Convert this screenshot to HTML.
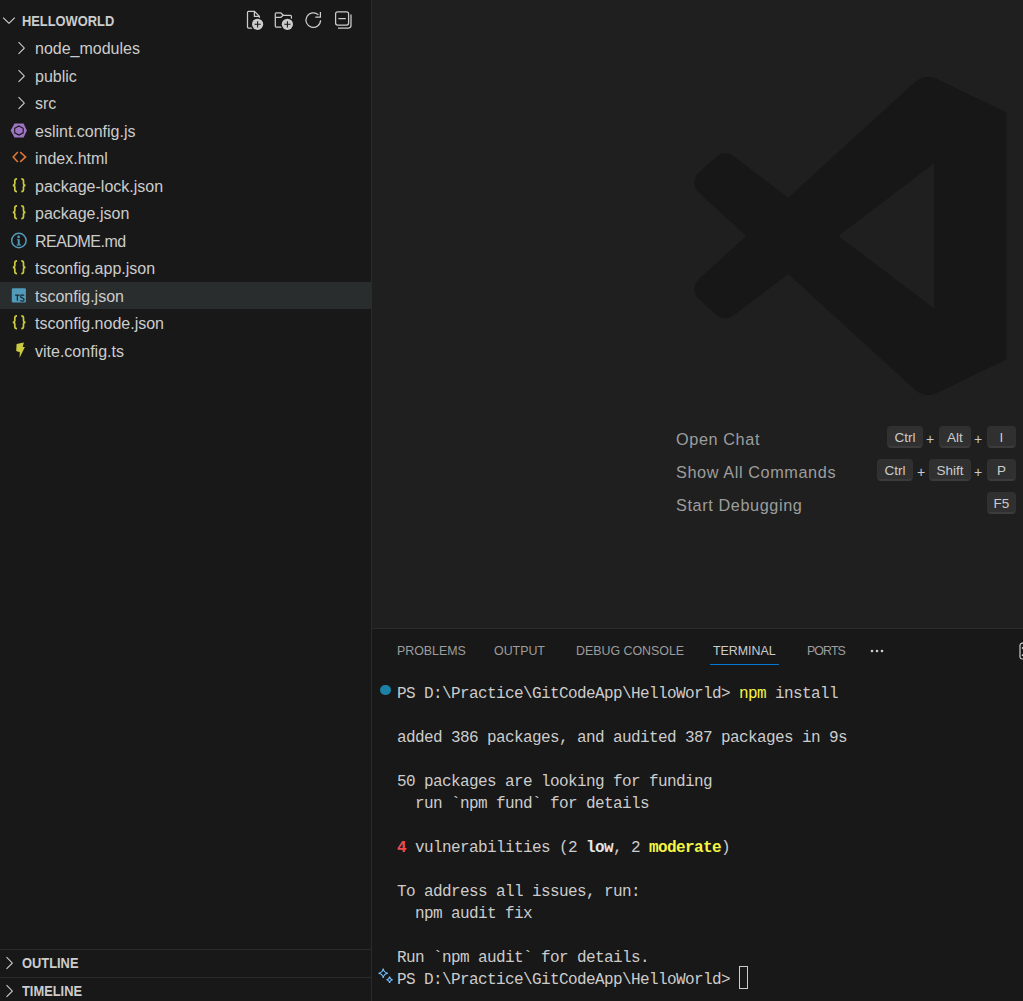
<!DOCTYPE html>
<html><head><meta charset="utf-8">
<style>
*{margin:0;padding:0;box-sizing:border-box}
html,body{width:1023px;height:1001px;overflow:hidden;background:#1f1f1f}
body{position:relative;font-family:"Liberation Sans",sans-serif;color:#cccccc}
.abs{position:absolute}
#sidebar{position:absolute;left:0;top:0;width:371px;height:1001px;background:#181818}
#sbborder{position:absolute;left:371px;top:0;width:1px;height:1001px;background:#2b2b2b}
#editor{position:absolute;left:372px;top:0;width:651px;height:628px;background:#1f1f1f;overflow:hidden}
#panel{position:absolute;left:372px;top:628px;width:651px;height:373px;background:#181818;border-top:1px solid #2b2b2b;overflow:hidden}
.row{position:absolute;left:0;width:371px;height:27.5px}
.row .lbl{position:absolute;left:35px;top:1px;line-height:27.5px;font-size:16px;white-space:pre;color:#cccccc}
.row.sel{background:#2a2d2e}
.row svg{position:absolute}
.hdr{position:absolute;font-weight:bold;font-size:14.3px;color:#cccccc;white-space:pre;transform-origin:0 0;transform:scaleX(0.9)}
.sech{position:absolute;left:0;width:371px;height:27.5px;border-top:1px solid #2b2b2b}
.term{position:absolute;left:25px;top:0;font-family:"Liberation Mono",monospace;font-size:16px;letter-spacing:-0.6px;line-height:22px;white-space:pre;color:#cccccc}
.tab{position:absolute;top:0;font-size:12.4px;line-height:20px;color:#9d9d9d;white-space:pre}
.wm{position:absolute;font-size:16.25px;letter-spacing:0.6px;color:#9d9d9d;white-space:pre}
.key{position:absolute;height:21.5px;background:#303030;border:1px solid rgba(51,51,51,0.6);border-bottom-color:rgba(68,68,68,0.6);border-radius:4px;box-shadow:inset 0 -1px 0 rgba(68,68,68,0.6);font-size:13.5px;line-height:21.5px;text-align:center;color:#cccccc}
.plus{position:absolute;font-size:14px;color:#cccccc;margin-top:3px}
</style></head><body>
<div id="sidebar">
  <!-- header -->
  <svg class="abs" style="left:-0.6px;top:10px" width="20" height="20" viewBox="0 0 16 16"><path fill="#cccccc" d="M7.976 10.072l4.357-4.357.62.618L8.284 11h-.618L3 6.333l.619-.618 4.357 4.357z"/></svg>
  <div class="hdr" style="left:22px;top:12px;line-height:18px">HELLOWORLD</div>
  <svg class="abs" style="left:244px;top:8px" width="112" height="24" viewBox="244 8 112 24" fill="none" stroke="#cccccc" stroke-width="1.25">
    <path d="M252.3 28 H248.5 Q247.5 28 247.5 27 V12.3 Q247.5 11.4 248.5 11.4 H254.5 L259.3 16.2 V18.6"/>
    <path d="M254.4 11.6 V16.3 H259.2"/>
    <circle cx="257.6" cy="24.3" r="6.7" fill="#181818" stroke="none"/><circle cx="257.6" cy="24.3" r="5.6" fill="#cccccc" stroke="none"/>
    <path d="M257.6 21.2 V27.4 M254.5 24.3 H260.7" stroke="#181818" stroke-width="1.05"/>
    <path d="M281.8 27.1 H276.3 Q275.3 27.1 275.3 26.1 V13.8 Q275.3 12.8 276.3 12.8 H280.8 L283.3 15.3 H290.4 Q291.4 15.3 291.4 16.3 V18.7"/>
    <path d="M275.5 17.3 H280.8 L283.3 15.3"/>
    <circle cx="287.4" cy="24.3" r="6.7" fill="#181818" stroke="none"/><circle cx="287.4" cy="24.3" r="5.6" fill="#cccccc" stroke="none"/>
    <path d="M287.4 21.2 V27.4 M284.3 24.3 H290.5" stroke="#181818" stroke-width="1.05"/>
    <path d="M320.6 20.3 A7.3 7.3 0 1 1 318.4 14.9"/>
    <path d="M320.4 12 V17.1 H315.3"/>
    <rect x="335.6" y="11.8" width="13" height="13.2" rx="2"/>
    <path d="M338.4 18.6 H345.8"/>
    <path d="M338 28 H348.6 Q351 28 351 25.6 V14.6"/>
  </svg>

  <div class="row" style="top:34px"><svg style="left:11px;top:4px" width="20" height="20" viewBox="0 0 16 16"><path fill="#cccccc" d="M10.072 8.024L5.715 3.667l.618-.62L11 7.716v.618L6.333 13l-.618-.619 4.357-4.357z"/></svg><div class="lbl">node_modules</div></div>
  <div class="row" style="top:61.5px"><svg style="left:11px;top:4px" width="20" height="20" viewBox="0 0 16 16"><path fill="#cccccc" d="M10.072 8.024L5.715 3.667l.618-.62L11 7.716v.618L6.333 13l-.618-.619 4.357-4.357z"/></svg><div class="lbl">public</div></div>
  <div class="row" style="top:89px"><svg style="left:11px;top:4px" width="20" height="20" viewBox="0 0 16 16"><path fill="#cccccc" d="M10.072 8.024L5.715 3.667l.618-.62L11 7.716v.618L6.333 13l-.618-.619 4.357-4.357z"/></svg><div class="lbl">src</div></div>
  <div class="row" style="top:116.5px"><svg style="left:8px;top:0" width="24" height="27" viewBox="8 116.5 24 27"><polygon points="10.6,130 14.5,122.9 23.6,122.9 26.9,130 23.6,137 14.5,137" fill="#a074c4"/><polygon points="18.9,125.4 23.2,127.8 23.2,132.3 18.9,134.6 14.7,132.3 14.7,127.8" fill="none" stroke="#181818" stroke-width="1.1"/></svg><div class="lbl">eslint.config.js</div></div>
  <div class="row" style="top:144px"><svg style="left:8px;top:0" width="24" height="27" viewBox="8 144 24 27"><path d="M17.8 152.1 L13.2 156.9 L17.8 161.9 M20.2 152.1 L25.6 156.9 L20.2 161.9" fill="none" stroke="#e37933" stroke-width="1.5"/></svg><div class="lbl">index.html</div></div>
  <div class="row" style="top:171.5px"><svg style="left:8px;top:0" width="24" height="27" viewBox="8 0 24 27"><g fill="none" stroke="#cbcb41" stroke-width="1.7"><path d="M17 6.9 Q14.8 6.9 14.8 9 V11.6 Q14.8 13.3 12.8 13.3 Q14.8 13.3 14.8 15 V17.6 Q14.8 19.7 17 19.7"/><path d="M21.3 6.9 Q23.5 6.9 23.5 9 V11.6 Q23.5 13.3 25.5 13.3 Q23.5 13.3 23.5 15 V17.6 Q23.5 19.7 21.3 19.7"/></g></svg><div class="lbl">package-lock.json</div></div>
  <div class="row" style="top:199px"><svg style="left:8px;top:0" width="24" height="27" viewBox="8 0 24 27"><g fill="none" stroke="#cbcb41" stroke-width="1.7"><path d="M17 6.9 Q14.8 6.9 14.8 9 V11.6 Q14.8 13.3 12.8 13.3 Q14.8 13.3 14.8 15 V17.6 Q14.8 19.7 17 19.7"/><path d="M21.3 6.9 Q23.5 6.9 23.5 9 V11.6 Q23.5 13.3 25.5 13.3 Q23.5 13.3 23.5 15 V17.6 Q23.5 19.7 21.3 19.7"/></g></svg><div class="lbl">package.json</div></div>
  <div class="row" style="top:226.5px"><svg style="left:8px;top:0" width="24" height="27" viewBox="8 226.5 24 27"><circle cx="18.9" cy="240" r="7.2" fill="none" stroke="#519aba" stroke-width="1.5"/><circle cx="18.6" cy="236.4" r="1.3" fill="#519aba"/><path d="M16.9 238.8 H19.7 V244.1 H21 V245 H16.6 V244.1 H17.8 V239.7 H16.9 Z" fill="#519aba"/></svg><div class="lbl" style="letter-spacing:-0.5px">README.md</div></div>
  <div class="row" style="top:254px"><svg style="left:8px;top:0" width="24" height="27" viewBox="8 0 24 27"><g fill="none" stroke="#cbcb41" stroke-width="1.7"><path d="M17 6.9 Q14.8 6.9 14.8 9 V11.6 Q14.8 13.3 12.8 13.3 Q14.8 13.3 14.8 15 V17.6 Q14.8 19.7 17 19.7"/><path d="M21.3 6.9 Q23.5 6.9 23.5 9 V11.6 Q23.5 13.3 25.5 13.3 Q23.5 13.3 23.5 15 V17.6 Q23.5 19.7 21.3 19.7"/></g></svg><div class="lbl">tsconfig.app.json</div></div>
  <div class="row sel" style="top:281.5px"><svg style="left:8px;top:0" width="24" height="27" viewBox="8 281.5 24 27"><rect x="11.8" y="287.8" width="14.1" height="14.2" rx="1.2" fill="#519aba"/><path d="M15.1 294.6 H19.6 M17.35 294.6 V300.3" stroke="#1c2830" stroke-width="1.2" fill="none"/><path d="M24 295.2 Q23.3 294.4 22.2 294.4 Q20.5 294.4 20.5 295.8 Q20.5 297 22.2 297.4 Q24.1 297.9 24.1 299.2 Q24.1 300.6 22.2 300.6 Q20.9 300.6 20.2 299.8" stroke="#1c2830" stroke-width="1.2" fill="none"/></svg><div class="lbl">tsconfig.json</div></div>
  <div class="row" style="top:309px"><svg style="left:8px;top:0" width="24" height="27" viewBox="8 0 24 27"><g fill="none" stroke="#cbcb41" stroke-width="1.7"><path d="M17 6.9 Q14.8 6.9 14.8 9 V11.6 Q14.8 13.3 12.8 13.3 Q14.8 13.3 14.8 15 V17.6 Q14.8 19.7 17 19.7"/><path d="M21.3 6.9 Q23.5 6.9 23.5 9 V11.6 Q23.5 13.3 25.5 13.3 Q23.5 13.3 23.5 15 V17.6 Q23.5 19.7 21.3 19.7"/></g></svg><div class="lbl">tsconfig.node.json</div></div>
  <div class="row" style="top:336.5px"><svg style="left:8px;top:0" width="24" height="27" viewBox="8 336.5 24 27"><polygon points="16.6,343.6 23.9,342 22.7,346.4 24.9,346.4 19.5,357.6 19.8,351.8 16.2,350.6" fill="#cbcb41"/></svg><div class="lbl">vite.config.ts</div></div>

  <div class="sech" style="top:949px"></div>
  <svg class="abs" style="left:-1px;top:953px" width="20" height="20" viewBox="0 0 16 16"><path fill="#cccccc" d="M10.072 8.024L5.715 3.667l.618-.62L11 7.716v.618L6.333 13l-.618-.619 4.357-4.357z"/></svg><div class="hdr" style="left:22px;top:950px;line-height:27px">OUTLINE</div>
  <div class="sech" style="top:977px"></div>
  <svg class="abs" style="left:-1px;top:981px" width="20" height="20" viewBox="0 0 16 16"><path fill="#cccccc" d="M10.072 8.024L5.715 3.667l.618-.62L11 7.716v.618L6.333 13l-.618-.619 4.357-4.357z"/></svg><div class="hdr" style="left:22px;top:978px;line-height:27px">TIMELINE</div>
</div>
<div id="sbborder"></div>

<div id="editor">
  <svg class="abs" style="left:0;top:0" width="651" height="628" viewBox="372 0 651 628">
    <defs><clipPath id="lc"><rect x="600" y="0" width="406.2" height="628"/></clipPath></defs>
    <g clip-path="url(#lc)"><path fill="#171717" fill-rule="evenodd" transform="translate(694.35 76.1) scale(3.196)" d="M70.9119 99.3171C72.4869 99.9307 74.2828 99.8914 75.8725 99.1264L96.4608 89.2197C98.6242 88.1787 100 85.9892 100 83.5872V16.4133C100 14.0113 98.6243 11.8218 96.4609 10.7808L75.8725 0.873756C73.7862 -0.130129 71.3446 0.11576 69.5135 1.44695C69.252 1.63711 69.0028 1.84943 68.769 2.08341L29.3551 38.0415L12.1872 25.0096C10.589 23.7965 8.35363 23.8959 6.86933 25.2461L1.36303 30.2549C-0.452552 31.9064 -0.454633 34.7627 1.35853 36.417L16.2471 50.0001L1.35853 63.5832C-0.454633 65.2374 -0.452552 68.0938 1.36303 69.7453L6.86933 74.7541C8.35363 76.1043 10.589 76.2037 12.1872 74.9905L29.3551 61.9587L68.769 97.9167C69.3925 98.5406 70.1246 99.0104 70.9119 99.3171ZM75.0152 27.2989L45.1091 50.0001L75.0152 72.7012V27.2989Z"/></g>
  </svg>
  <div class="wm" style="left:304px;top:429.7px">Open Chat</div>
  <div class="wm" style="left:304px;top:462.7px">Show All Commands</div>
  <div class="wm" style="left:304px;top:495.7px">Start Debugging</div>
  <div class="key" style="left:515px;top:426px;width:36px">Ctrl</div>
  <div class="plus" style="left:554px;top:428px">+</div>
  <div class="key" style="left:567px;top:426px;width:32px">Alt</div>
  <div class="plus" style="left:602px;top:428px">+</div>
  <div class="key" style="left:615px;top:426px;width:29px">I</div>
  <div class="key" style="left:505px;top:459px;width:36px">Ctrl</div>
  <div class="plus" style="left:545px;top:461px">+</div>
  <div class="key" style="left:557px;top:459px;width:42px">Shift</div>
  <div class="plus" style="left:602px;top:461px">+</div>
  <div class="key" style="left:615px;top:459px;width:29px">P</div>
  <div class="key" style="left:615px;top:492px;width:29px">F5</div>
</div>

<div id="panel">
  <div class="tab" style="left:25px;top:12px">PROBLEMS</div>
  <div class="tab" style="left:122px;top:12px">OUTPUT</div>
  <div class="tab" style="left:204px;top:12px">DEBUG CONSOLE</div>
  <div class="tab" style="left:341px;top:12px;color:#cccccc">TERMINAL</div>
  <div class="abs" style="left:338px;top:35px;width:69px;height:1px;background:#0078d4"></div>
  <div class="tab" style="left:435px;top:12px;letter-spacing:-0.9px">PORTS</div>


  <svg class="abs" style="left:497px;top:14px" width="16" height="16" viewBox="0 0 16 16"><circle cx="3" cy="8" r="1.3" fill="#cccccc"/><circle cx="8" cy="8" r="1.3" fill="#cccccc"/><circle cx="13" cy="8" r="1.3" fill="#cccccc"/></svg>
  <svg class="abs" style="left:640px;top:10px" width="20" height="24" viewBox="0 0 20 24"><rect x="8" y="4.2" width="14" height="15.8" rx="2.2" fill="none" stroke="#cccccc" stroke-width="1.2"/><circle cx="10.6" cy="9" r="0.9" fill="#cccccc"/><circle cx="10.6" cy="16.2" r="0.9" fill="#cccccc"/></svg>
  <div class="abs" style="left:8.3px;top:55.8px;width:10.5px;height:10.5px;border-radius:50%;background:#1b81a8"></div>
  <svg class="abs" style="left:4px;top:335px" width="22" height="22" viewBox="0 0 22 22" fill="none" stroke="#75beff" stroke-width="1.1">
    <path d="M7.2 4.5 Q7.8 8.6 11.9 9.2 Q7.8 9.8 7.2 13.9 Q6.6 9.8 2.5 9.2 Q6.6 8.6 7.2 4.5 Z"/>
    <path d="M13.6 12.6 Q14 15.4 16.7 15.8 Q14 16.2 13.6 19 Q13.2 16.2 10.5 15.8 Q13.2 15.4 13.6 12.6 Z"/>
  </svg>
  <div class="abs" style="left:366.8px;top:337px;width:9.6px;height:22.7px;border:1px solid #cccccc"></div>
  <div class="term" style="top:54px">PS D:\Practice\GitCodeApp\HelloWorld&gt; <span style="color:#f5f543">npm</span> install

added 386 packages, and audited 387 packages in 9s

50 packages are looking for funding
  run `npm fund` for details

<span style="color:#f14c4c;font-weight:bold">4</span> vulnerabilities (2 <b style="color:#e5e5e5">low</b>, 2 <b style="color:#f5f543">moderate</b>)

To address all issues, run:
  npm audit fix

Run `npm audit` for details.
PS D:\Practice\GitCodeApp\HelloWorld&gt; </div>
</div>
</body></html>
